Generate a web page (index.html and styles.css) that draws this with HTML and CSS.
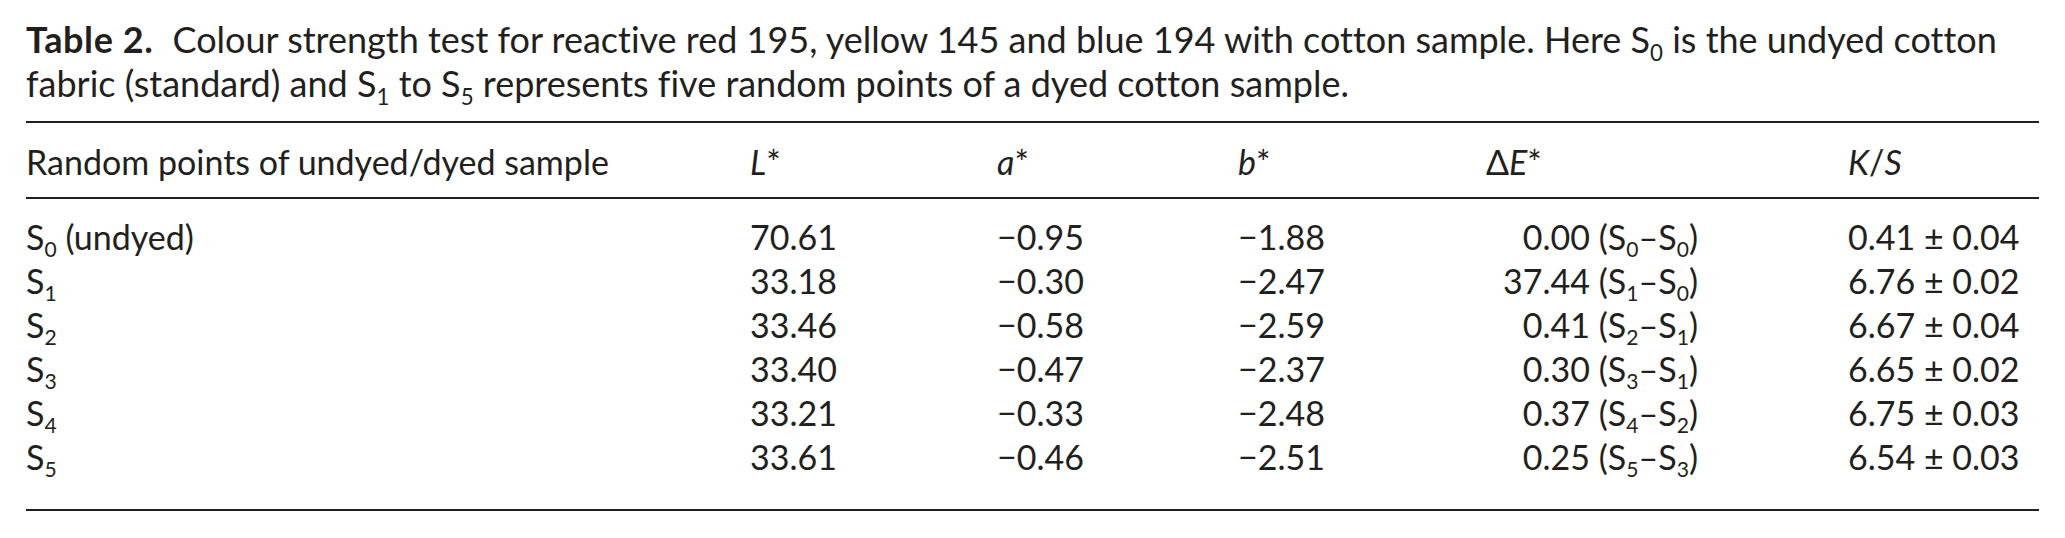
FILE: index.html
```html
<!DOCTYPE html>
<html lang="en">
<head>
<meta charset="utf-8">
<title>Table 2</title>
<link rel="stylesheet" href="styles.css">
</head>
<body>
<div class="page">
  <p class="caption"><span class="label">Table 2.</span><span class="gap"></span>Colour strength test for reactive red 195, yellow 145 and blue 194 with cotton sample. Here S<sub>0</sub> is the undyed cotton fabric (standard) and S<sub>1</sub> to S<sub>5</sub> represents five random points of a dyed cotton sample.</p>
  <table class="data">
    <colgroup>
      <col class="c-name"><col class="c-l"><col class="c-a"><col class="c-b"><col class="c-de"><col class="c-ks">
    </colgroup>
    <thead>
      <tr>
        <th>Random points of undyed/dyed sample</th>
        <th><i>L</i>*</th>
        <th><i>a</i>*</th>
        <th><i>b</i>*</th>
        <th>&Delta;<i>E</i>*</th>
        <th><i>K</i>/<i>S</i></th>
      </tr>
    </thead>
    <tbody>
      <tr class="first">
        <td>S<sub>0</sub> (undyed)</td><td>70.61</td><td>&minus;0.95</td><td>&minus;1.88</td>
        <td><span class="num">0.00</span> (S<sub>0</sub>&ndash;S<sub>0</sub>)</td><td>0.41 &plusmn; 0.04</td>
      </tr>
      <tr>
        <td>S<sub>1</sub></td><td>33.18</td><td>&minus;0.30</td><td>&minus;2.47</td>
        <td><span class="num">37.44</span> (S<sub>1</sub>&ndash;S<sub>0</sub>)</td><td>6.76 &plusmn; 0.02</td>
      </tr>
      <tr>
        <td>S<sub>2</sub></td><td>33.46</td><td>&minus;0.58</td><td>&minus;2.59</td>
        <td><span class="num">0.41</span> (S<sub>2</sub>&ndash;S<sub>1</sub>)</td><td>6.67 &plusmn; 0.04</td>
      </tr>
      <tr>
        <td>S<sub>3</sub></td><td>33.40</td><td>&minus;0.47</td><td>&minus;2.37</td>
        <td><span class="num">0.30</span> (S<sub>3</sub>&ndash;S<sub>1</sub>)</td><td>6.65 &plusmn; 0.02</td>
      </tr>
      <tr>
        <td>S<sub>4</sub></td><td>33.21</td><td>&minus;0.33</td><td>&minus;2.48</td>
        <td><span class="num">0.37</span> (S<sub>4</sub>&ndash;S<sub>2</sub>)</td><td>6.75 &plusmn; 0.03</td>
      </tr>
      <tr class="last">
        <td>S<sub>5</sub></td><td>33.61</td><td>&minus;0.46</td><td>&minus;2.51</td>
        <td><span class="num">0.25</span> (S<sub>5</sub>&ndash;S<sub>3</sub>)</td><td>6.54 &plusmn; 0.03</td>
      </tr>
    </tbody>
  </table>
</div>
</body>
</html>
```

FILE: styles.css
```css
html, body {
  margin: 0;
  padding: 0;
  background: #ffffff;
}

body {
  font-family: Lato, "Open Sans", sans-serif;
  font-variant-ligatures: none;
  color: #231f20;
}

.page {
  padding: 17px 26px 0 26px;
  width: 2013px;
}

.caption {
  margin: 0;
  font-size: 36px;
  line-height: 44px;
  letter-spacing: 0;
}

.caption .label {
  font-weight: 700;
  letter-spacing: 0.6px;
}

.caption .gap {
  display: inline-block;
  width: 19px;
}

sub {
  font-size: 0.62em;
  line-height: 0;
  vertical-align: -0.34em;
}

.data {
  margin-top: 16px;
  width: 100%;
  border-collapse: collapse;
  table-layout: fixed;
  font-size: 34px;
  border-top: 2px solid #231f20;
  border-bottom: 2px solid #231f20;
}

.c-name { width: 724px; }
.c-l { width: 247px; }
.c-a { width: 241px; }
.c-b { width: 248px; }
.c-de { width: 362px; }
.c-ks { width: auto; }

.data th,
.data td {
  padding: 0;
  text-align: left;
  font-weight: 400;
  line-height: 44px;
  height: 44px;
  white-space: nowrap;
  vertical-align: top;
}

.data th {
  padding: 17px 0 13px 0;
  border-bottom: 2px solid #231f20;
}

.data i {
  font-style: italic;
}

.data tr.first td {
  padding-top: 16px;
}

.data tr.last td {
  padding-bottom: 30px;
}

.num {
  display: inline-block;
  width: 104px;
  text-align: right;
}
```
